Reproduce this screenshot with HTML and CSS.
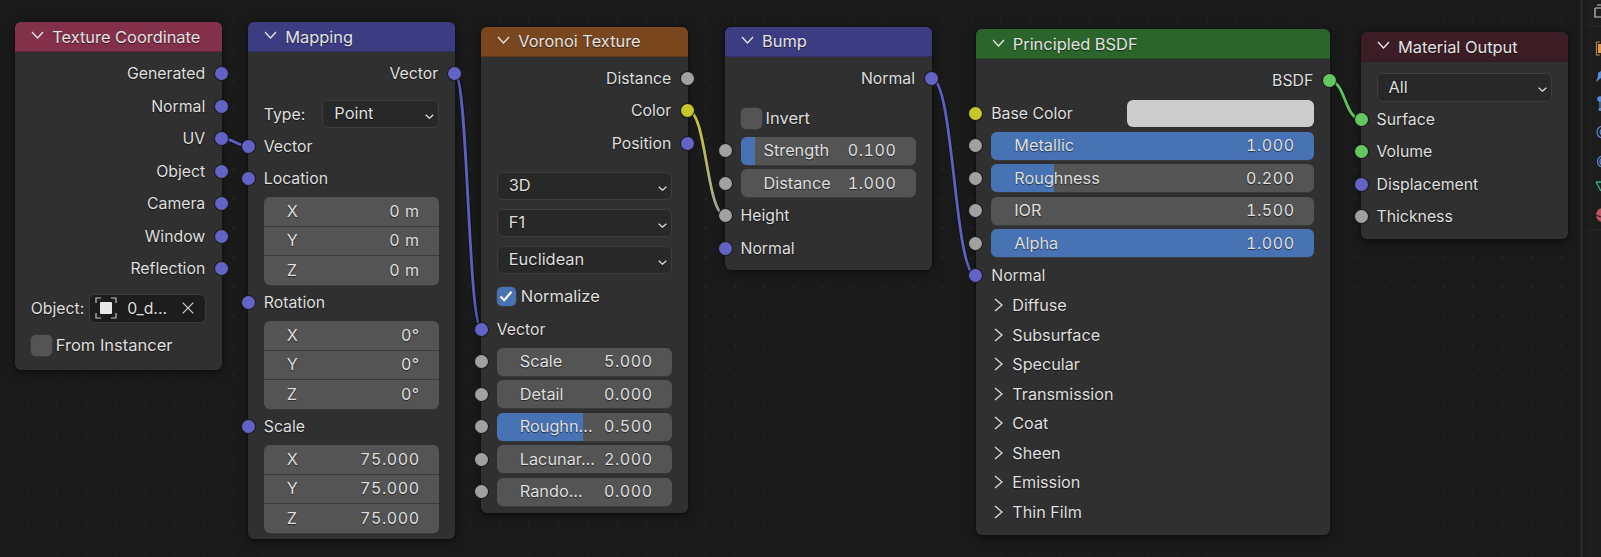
FILE: index.html
```html
<!DOCTYPE html>
<html lang="en">
<head>
    <meta charset="UTF-8">
    <title>Shader Editor</title>
    <link rel="stylesheet" href="styles.css">
</head>
<body>
    <svg class="sprite" width="0" height="0">
        <symbol id="chev-down" viewBox="0 0 13 8"><path d="M1 1l5.5 6L12 1" fill="none" stroke="currentColor" stroke-width="1.3"/></symbol>
        <symbol id="chev-right" viewBox="0 0 9 14"><path d="M1 1l7 6-7 6" fill="none" stroke="currentColor" stroke-width="1.3"/></symbol>
        <symbol id="chev-small" viewBox="0 0 9 5"><path d="M.7.7l3.8 3.5L8.3.7" fill="none" stroke="currentColor" stroke-width="1.3"/></symbol>
    </svg>

    <div class="editor">
        <main class="canvas">
            <svg class="wires" width="1580" height="557">
                <defs>
                    <linearGradient id="colorToValue" gradientUnits="userSpaceOnUse" x1="688" y1="110" x2="725" y2="215">
                        <stop offset="0" stop-color="#c7c729"/>
                        <stop offset="1" stop-color="#a1a1a1"/>
                    </linearGradient>
                </defs>
                <g class="wire-shadow">
                    <path d="M222 138.3C235 138.3 235 146 248.5 146"/>
                    <path d="M455 73.3C468 73.3 468 329 481.5 329"/>
                    <path d="M688 110.7C706.5 110.7 706.5 215 725 215"/>
                    <path d="M931.5 78.3C954 78.3 954 275.7 976 275.7"/>
                    <path d="M1330 81C1345 81 1345 119.3 1361 119.3"/>
                </g>
                <g class="wire">
                    <path stroke="#5f5fc4" d="M222 138.3C235 138.3 235 146 248.5 146"/>
                    <path stroke="#5f5fc4" d="M455 73.3C468 73.3 468 329 481.5 329"/>
                    <path stroke="url(#colorToValue)" d="M688 110.7C706.5 110.7 706.5 215 725 215"/>
                    <path stroke="#5f5fc4" d="M931.5 78.3C954 78.3 954 275.7 976 275.7"/>
                    <path stroke="#5cc45c" d="M1330 81C1345 81 1345 119.3 1361 119.3"/>
                </g>
            </svg>

            <section class="node node-texcoord">
                <header class="node-head head-input"><svg class="head-chev"><use href="#chev-down"/></svg>Texture Coordinate</header>
                <div class="node-body">
                    <div class="row out"><span>Generated</span><i class="sock right blue"></i></div>
                    <div class="row out"><span>Normal</span><i class="sock right blue"></i></div>
                    <div class="row out"><span>UV</span><i class="sock right blue"></i></div>
                    <div class="row out"><span>Object</span><i class="sock right blue"></i></div>
                    <div class="row out"><span>Camera</span><i class="sock right blue"></i></div>
                    <div class="row out"><span>Window</span><i class="sock right blue"></i></div>
                    <div class="row out"><span>Reflection</span><i class="sock right blue"></i></div>
                    <div class="row-object">
                        <span>Object:</span>
                        <div class="picker">
                            <svg class="picker-icon" width="22" height="22" viewBox="0 0 22 22">
                                <path d="M1 6V1h5M16 1h5v5M1 16v5h5M16 21h5v-5" fill="none" stroke="#c4c4c4" stroke-width="1.2"/>
                                <rect x="5" y="5" width="12" height="12" rx="1" fill="#e8e8e8"/>
                            </svg>
                            <span class="picker-name">0_d...</span>
                            <svg width="12" height="12" viewBox="0 0 12 12"><path d="M.7.7l10.6 10.6M11.3.7L.7 11.3" fill="none" stroke="#d0d0d0" stroke-width="1.2"/></svg>
                        </div>
                    </div>
                    <div class="row check-row mt-instancer"><b class="check"></b><span>From Instancer</span></div>
                </div>
            </section>

            <section class="node node-mapping">
                <header class="node-head head-vector"><svg class="head-chev"><use href="#chev-down"/></svg>Mapping</header>
                <div class="node-body">
                    <div class="row out"><span>Vector</span><i class="sock right blue"></i></div>
                    <div class="row-type">
                        <span>Type:</span>
                        <div class="select select-type">Point<svg class="select-chev"><use href="#chev-small"/></svg></div>
                    </div>
                    <div class="row mt-vector"><span>Vector</span><i class="sock left blue"></i></div>
                    <div class="row"><span>Location</span><i class="sock left blue"></i></div>
                    <div class="xyz">
                        <div class="xyz-cell"><span>X</span><span class="val">0 m</span></div>
                        <div class="xyz-cell"><span>Y</span><span class="val">0 m</span></div>
                        <div class="xyz-cell"><span>Z</span><span class="val">0 m</span></div>
                    </div>
                    <div class="row"><span>Rotation</span><i class="sock left blue"></i></div>
                    <div class="xyz">
                        <div class="xyz-cell"><span>X</span><span class="val">0°</span></div>
                        <div class="xyz-cell"><span>Y</span><span class="val">0°</span></div>
                        <div class="xyz-cell"><span>Z</span><span class="val">0°</span></div>
                    </div>
                    <div class="row"><span>Scale</span><i class="sock left blue"></i></div>
                    <div class="xyz">
                        <div class="xyz-cell"><span>X</span><span class="val">75.000</span></div>
                        <div class="xyz-cell"><span>Y</span><span class="val">75.000</span></div>
                        <div class="xyz-cell"><span>Z</span><span class="val">75.000</span></div>
                    </div>
                </div>
            </section>

            <section class="node node-voronoi">
                <header class="node-head head-texture"><svg class="head-chev"><use href="#chev-down"/></svg>Voronoi Texture</header>
                <div class="node-body">
                    <div class="row out"><span>Distance</span><i class="sock right grey"></i></div>
                    <div class="row out"><span>Color</span><i class="sock right yellow"></i></div>
                    <div class="row out"><span>Position</span><i class="sock right blue"></i></div>
                    <div class="select-row mt-dim"><div class="select">3D<svg class="select-chev"><use href="#chev-small"/></svg></div></div>
                    <div class="select-row"><div class="select">F1<svg class="select-chev"><use href="#chev-small"/></svg></div></div>
                    <div class="select-row"><div class="select">Euclidean<svg class="select-chev"><use href="#chev-small"/></svg></div></div>
                    <div class="row check-row mt-normalize">
                        <b class="check checked"><svg width="14" height="12" viewBox="0 0 14 12"><path d="M1.5 6.5l3.7 3.7L12.5 1.8" fill="none" stroke="#fff" stroke-width="2.2"/></svg></b>
                        <span>Normalize</span>
                    </div>
                    <div class="row mt-half"><span>Vector</span><i class="sock left blue"></i></div>
                    <div class="row"><i class="sock left grey"></i><div class="slider"><span>Scale</span><span class="val">5.000</span></div></div>
                    <div class="row"><i class="sock left grey"></i><div class="slider"><span>Detail</span><span class="val">0.000</span></div></div>
                    <div class="row"><i class="sock left grey"></i><div class="slider"><em class="fill" style="width: 49%"></em><span>Roughn...</span><span class="val">0.500</span></div></div>
                    <div class="row"><i class="sock left grey"></i><div class="slider"><span>Lacunar...</span><span class="val">2.000</span></div></div>
                    <div class="row"><i class="sock left grey"></i><div class="slider"><span>Rando...</span><span class="val">0.000</span></div></div>
                </div>
            </section>

            <section class="node node-bump">
                <header class="node-head head-vector"><svg class="head-chev"><use href="#chev-down"/></svg>Bump</header>
                <div class="node-body">
                    <div class="row out"><span>Normal</span><i class="sock right blue"></i></div>
                    <div class="row check-row mt-invert"><b class="check"></b><span>Invert</span></div>
                    <div class="row"><i class="sock left grey"></i><div class="slider"><em class="fill" style="width: 8.5%"></em><span>Strength</span><span class="val">0.100</span></div></div>
                    <div class="row"><i class="sock left grey"></i><div class="slider"><span>Distance</span><span class="val">1.000</span></div></div>
                    <div class="row"><span>Height</span><i class="sock left grey"></i></div>
                    <div class="row"><span>Normal</span><i class="sock left blue"></i></div>
                </div>
            </section>

            <section class="node node-bsdf">
                <header class="node-head head-shader"><svg class="head-chev"><use href="#chev-down"/></svg>Principled BSDF</header>
                <div class="node-body">
                    <div class="row out"><span>BSDF</span><i class="sock right green"></i></div>
                    <div class="row"><span>Base Color</span><i class="sock left yellow"></i><div class="swatch"></div></div>
                    <div class="row"><i class="sock left grey"></i><div class="slider"><em class="fill" style="width: 100%"></em><span>Metallic</span><span class="val">1.000</span></div></div>
                    <div class="row"><i class="sock left grey"></i><div class="slider"><em class="fill" style="width: 19.5%"></em><span>Roughness</span><span class="val">0.200</span></div></div>
                    <div class="row"><i class="sock left grey"></i><div class="slider"><span>IOR</span><span class="val">1.500</span></div></div>
                    <div class="row"><i class="sock left grey"></i><div class="slider"><em class="fill" style="width: 100%"></em><span>Alpha</span><span class="val">1.000</span></div></div>
                    <div class="row"><span>Normal</span><i class="sock left blue"></i></div>
                    <div class="panels">
                        <div class="panel"><svg class="panel-chev"><use href="#chev-right"/></svg>Diffuse</div>
                        <div class="panel"><svg class="panel-chev"><use href="#chev-right"/></svg>Subsurface</div>
                        <div class="panel"><svg class="panel-chev"><use href="#chev-right"/></svg>Specular</div>
                        <div class="panel"><svg class="panel-chev"><use href="#chev-right"/></svg>Transmission</div>
                        <div class="panel"><svg class="panel-chev"><use href="#chev-right"/></svg>Coat</div>
                        <div class="panel"><svg class="panel-chev"><use href="#chev-right"/></svg>Sheen</div>
                        <div class="panel"><svg class="panel-chev"><use href="#chev-right"/></svg>Emission</div>
                        <div class="panel"><svg class="panel-chev"><use href="#chev-right"/></svg>Thin Film</div>
                    </div>
                </div>
            </section>

            <section class="node node-output">
                <header class="node-head head-output"><svg class="head-chev"><use href="#chev-down"/></svg>Material Output</header>
                <div class="node-body">
                    <div class="select-row mt-all"><div class="select select-all">All<svg class="select-chev"><use href="#chev-small"/></svg></div></div>
                    <div class="row mt-surface"><span>Surface</span><i class="sock left green"></i></div>
                    <div class="row"><span>Volume</span><i class="sock left green"></i></div>
                    <div class="row"><span>Displacement</span><i class="sock left blue"></i></div>
                    <div class="row"><span>Thickness</span><i class="sock left grey"></i></div>
                </div>
            </section>
        </main>

        <div class="area-split"></div>

        <aside class="tabs">
            <svg width="13" height="557" viewBox="1 0 13 557">
                <path d="M10 5h4M8 8h6M8 8v9h6" fill="none" stroke="#c8c8c8" stroke-width="1.2"/>
                <path d="M0 26h14M0 230h14" stroke="#2a2a2a"/>
                <path d="M13 42H9.5v13H13" fill="none" stroke="#c2803f" stroke-width="1.2"/>
                <rect x="11" y="44" width="3" height="9" fill="#e09a4c"/>
                <path d="M9 82l5-4v-7l-3 2v3z" fill="#5b8ad6"/>
                <circle cx="13" cy="99" r="2.8" fill="#5b8ad6"/>
                <path d="M13 101v8" stroke="#5b8ad6" stroke-width="1.2"/>
                <circle cx="13" cy="109.5" r="1.5" fill="#5b8ad6"/>
                <circle cx="16" cy="132" r="6" fill="none" stroke="#5b8ad6" stroke-width="1.2"/>
                <circle cx="16" cy="132" r="2.8" fill="none" stroke="#5b8ad6" stroke-width="1.2"/>
                <circle cx="16" cy="161.5" r="5.5" fill="none" stroke="#5b8ad6" stroke-width="1.2"/>
                <circle cx="16" cy="161.5" r="3" fill="none" stroke="#5b8ad6" stroke-width="1.4"/>
                <path d="M9 182h6M9 182l5 9" fill="none" stroke="#2fb58f" stroke-width="1.3"/>
                <circle cx="16" cy="215" r="7" fill="#c2555f"/>
                <path d="M9 215q7 4 14 0" fill="none" stroke="#2a2a2a" stroke-width="1.2"/>
            </svg>
        </aside>
    </div>
</body>
</html>
```

FILE: styles.css
```css
* { box-sizing: border-box; }
html, body { margin: 0; height: 100%; overflow: hidden; }
body { background: #1a1a1a; color: #dedede; font-family: Inter, "Noto Sans", sans-serif; font-size: 15.8px; text-shadow: 0 1px 1px rgba(0,0,0,0.55); }
.sprite { position: absolute; }

.editor { display: flex; width: 1601px; height: 557px; }
.canvas { position: relative; width: 1580px; height: 557px; background-color: #1a1a1a; background-image: radial-gradient(circle, #252525 0.9px, transparent 1.2px); background-size: 29.5px 29.5px; background-position: 12.5px 6.75px; }
.area-split { width: 8px; background: linear-gradient(to right, #272727 0, #272727 3px, #1b1b1b 3px); }
.tabs { width: 13px; background: #1d1d1d; overflow: hidden; }
.tabs svg { display: block; }

/* links between sockets */
.wires { position: absolute; left: 0; top: 0; }
.wires path { fill: none; }
.wire-shadow path { stroke: #111; stroke-width: 4.5; }
.wire path { stroke-width: 2.8; }

/* nodes sit at their place on the node canvas */
.node { position: absolute; background: #303030; border-radius: 6px; box-shadow: 0 2px 9px rgba(0,0,0,0.55), 0 0 1px #111; }
.node-texcoord { left: 15.25px; top: 22px; width: 206.5px; height: 348px; }
.node-mapping { left: 248.25px; top: 22px; width: 206.5px; height: 517.3px; }
.node-voronoi { left: 481.25px; top: 26.75px; width: 206.5px; height: 485.85px; }
.node-bump { left: 725px; top: 26.75px; width: 206.5px; height: 242.75px; }
.node-bsdf { left: 975.75px; top: 29.25px; width: 354px; height: 505.75px; }
.node-output { left: 1361px; top: 32px; width: 206.5px; height: 206.7px; }

.node-head { display: flex; align-items: center; height: 30px; padding: 0.5px 0 0 16px; border-radius: 6px 6px 0 0; border-bottom: 1px solid rgba(0,0,0,0.2); color: #e2e2e2; font-size: 16.4px; }
.node-voronoi .node-head, .node-bump .node-head { padding-top: 0; }
.head-chev { width: 13px; height: 8px; margin-right: 8px; margin-top: -3px; color: #e6e6e6; }
.head-input { background: #83314a; }
.head-vector { background: #3c3c83; }
.head-texture { background: #79461d; }
.head-shader { background: #2b652b; }
.head-output { background: #3c1d26; }

.node-body { padding-top: 5.25px; }
.row { position: relative; display: flex; align-items: center; height: 32.5px; padding: 0 15.5px; }
.row.out { justify-content: flex-end; padding-right: 16.5px; }

.sock { position: absolute; top: 50%; width: 13px; height: 13px; margin-top: -6.5px; border-radius: 50%; box-shadow: 0 0 0 1px #1c1c1c; }
.sock.left { left: -6.5px; }
.sock.right { right: -6.5px; }
.blue { background: #6363c7; }
.grey { background: #a1a1a1; }
.yellow { background: #c7c729; }
.green { background: #63c763; }

.select-row { padding: 0 15.5px; margin-top: 8.5px; }
.select { position: relative; display: flex; align-items: center; height: 28.5px; padding: 0 0 0.75px 11px; background: #282828; border: 1px solid #3d3d3d; border-radius: 6px; font-size: 16.4px; }
.select-chev { position: absolute; right: 4px; top: 50%; width: 9px; height: 5px; color: #dcdcdc; }
.select-all { height: 29px; }

.row-type { display: flex; align-items: center; justify-content: space-between; height: 28.5px; margin-top: 10px; padding: 0 15.5px; }
.select-type { width: 117px; padding-bottom: 1.5px; }

.xyz { margin: 2px 15.5px; height: 87.5px; display: flex; flex-direction: column; border-radius: 6px; overflow: hidden; background: #545454; box-shadow: 0 1px 0 #3a3a3a; }
.xyz-cell { flex: 1; display: flex; align-items: center; justify-content: space-between; padding: 0 19.5px 1px 23px; border-top: 1px solid #3b3b3b; font-size: 16.3px; }
.xyz-cell:first-child { border-top: 0; }

.slider { position: relative; flex: 1; display: flex; align-items: center; justify-content: space-between; height: 28px; padding: 0 19.5px 1px 23px; background: #545454; border-radius: 6px; overflow: hidden; box-shadow: 0 1px 0 #3a3a3a; font-size: 16.3px; }
.slider span { position: relative; }
.fill { position: absolute; left: 0; top: 0; bottom: 0; background: #4772b3; }
.val { font-size: 16px; font-variant-numeric: tabular-nums; letter-spacing: 0.6px; }

.swatch { width: 187px; height: 27.5px; margin-left: auto; background: #cccccc; border-radius: 6px; }

.check { display: flex; align-items: center; justify-content: center; flex: none; width: 21px; height: 21px; margin-right: 4px; background: #545454; border-radius: 5px; box-shadow: 0 0 0 1px #3a3a3a; }
.check-row { font-size: 16.5px; }
.checked { width: 19px; height: 19px; margin-right: 5px; background: #4772b3; }

.row-object { display: flex; align-items: center; justify-content: space-between; height: 29px; margin-top: 9px; padding: 0 15.5px; }
.picker { display: flex; align-items: center; width: 117px; height: 29px; padding-left: 5px; background: #1d1d1d; border: 1px solid #3a3a3a; border-radius: 6px; }
.picker-icon { flex: none; }
.picker-name { flex: 1; margin-left: 10px; }
.picker svg:last-child { margin-right: 11px; }

.mt-instancer { margin-top: 6.25px; }
.mt-vector { margin-top: 1.75px; }
.mt-dim { margin-top: 12px; }
.mt-normalize { margin-top: 6px; }
.mt-half { margin-top: 0.5px; }
.mt-invert { margin-top: 7.25px; }
.mt-all { margin-top: 5.5px; }
.mt-surface { margin-top: 1.4px; }

.panels { margin-top: -1.5px; }
.panel { display: flex; align-items: center; height: 29.5px; padding-left: 18.5px; font-size: 16.2px; }
.panel-chev { width: 9px; height: 14px; margin-right: 9px; color: #dcdcdc; }
```
